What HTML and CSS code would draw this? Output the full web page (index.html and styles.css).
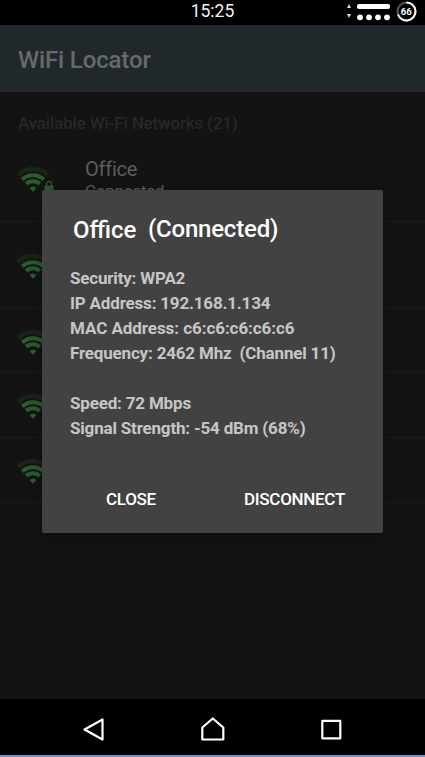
FILE: index.html
```
<!DOCTYPE html>
<html lang="en">
<head>
<meta charset="utf-8">
<title>WiFi Locator</title>
<link rel="stylesheet" href="styles.css">
</head>
<body>
<svg width="0" height="0" class="defs">
  <symbol id="wifi" viewBox="0 0 34 28">
    <path class="weak" d="M2 8.900A22 22 0 0 1 32 8.900"/>
    <path class="arc" d="M6.200 13.500A15.800 15.800 0 0 1 27.800 13.500"/>
    <path class="arc" d="M10.200 17.900A10 10 0 0 1 23.800 17.900"/>
    <path class="dot" d="M13.500 22Q17 19 20.500 22L17 26Z"/>
  </symbol>
</svg>
<div class="phone">
  <header class="status">
    <span class="clock">15:25</span>
    <svg class="signals" width="80" height="25" viewBox="345 0 80 25">
      <path fill="#ddd" d="M347 8l2-4 2 4zM347 14l2 4 2-4z"/>
      <rect x="357" y="4" width="33" height="5" rx="2" fill="#fff"/>
      <g fill="#fff"><circle cx="360" cy="17.300" r="2.900"/><circle cx="369" cy="17.300" r="2.900"/><circle cx="378" cy="17.300" r="2.900"/><circle cx="387" cy="17.300" r="2.900"/></g>
      <circle cx="406.500" cy="11.500" r="9" fill="none" stroke="#555" stroke-width="2"/>
      <path d="M406.500 2.500A9 9 0 1 1 398 14.500" fill="none" stroke="#fff" stroke-width="2"/>
      <text x="406.300" y="15" text-anchor="middle" class="battery">66</text>
    </svg>
  </header>
  <div class="appbar"><h1>WiFi Locator</h1></div>
  <main>
    <h2>Available Wi-Fi Networks (21)</h2>
    <div class="row first">
      <svg class="wifi"><use href="#wifi"/></svg>
      <svg class="lock" width="10" height="14" viewBox="0 0 10 14"><path d="M2.500 7V4a2.500 2.700 0 0 1 5 0V7" fill="none" stroke="#2b5c2d" stroke-width="1.300"/><rect x=".5" y="5.500" width="9" height="8" rx="1" fill="#2b5c2d"/></svg>
      <div class="network"><div class="name">Office</div><div class="state">Connected</div></div>
    </div>
    <div class="row second"><svg class="wifi"><use href="#wifi"/></svg></div>
    <div class="row"><svg class="wifi"><use href="#wifi"/></svg></div>
    <div class="row"><svg class="wifi"><use href="#wifi"/></svg></div>
    <div class="row"><svg class="wifi"><use href="#wifi"/></svg></div>
  </main>
  <nav>
    <svg width="425" height="56" viewBox="0 699 425 56" fill="none" stroke="#fff" stroke-width="2.200" stroke-linejoin="round">
      <path d="M84.500 729.500L102.500 719.500V739.500Z"/>
      <path d="M202.300 739.500V727.500L212.800 718.500L223.300 727.500V739.500Z"/>
      <rect x="322.300" y="720.800" width="18" height="17.500"/>
    </svg>
  </nav>
  <section class="dialog">
    <div class="title"><span class="ssid">Office</span><span class="conn">(Connected)</span></div>
    <div class="details">
      <p>Security: WPA2</p>
      <p>IP Address: 192.168.1.134</p>
      <p class="mac">MAC Address: c6:c6:c6:c6:c6</p>
      <p>Frequency: 2462 Mhz  (Channel 11)</p>
      <p></p>
      <p>Speed: 72 Mbps</p>
      <p>Signal Strength: -54 dBm (68%)</p>
    </div>
    <div class="actions"><button>CLOSE</button><button>DISCONNECT</button></div>
  </section>
</div>
</body>
</html>
```
FILE: styles.css
```
* { box-sizing: border-box; margin: 0; padding: 0; }
body { background: #131313; font-family: Roboto, sans-serif; }
.defs { position: absolute; }
.phone { position: relative; width: 425px; height: 757px; overflow: hidden; display: flex; flex-direction: column; background: #131313; border-bottom: 2px solid #6f8fd8; }
.status { position: relative; height: 25px; background: #000; text-align: center; flex: none; }
.clock { color: #f2f2f2; font-size: 17.500px; line-height: 23px; }
.signals { position: absolute; right: 0; top: 0; }
.battery { font: bold 9.500px Roboto, sans-serif; fill: #fff; }
.appbar { height: 67px; flex: none; background: #21282b; padding-left: 18px; }
h1 { font-size: 24px; font-weight: 500; line-height: 70px; letter-spacing: -.14px; color: #68696b; }
main { flex: 1; }
h2 { height: 55px; padding: 17px 0 0 18px; font-size: 17px; line-height: 28px; font-weight: 500; letter-spacing: -.17px; color: #23292c; }
.row { position: relative; height: 64.600px; padding: 4px 0 0 16px; border-bottom: 1px solid #1c1c1c; display: flex; align-items: center; }
.row.first { height: 74.600px; align-items: flex-start; padding-top: 18.500px; }
.row.second { height: 87.300px; }
.wifi { width: 34px; height: 28px; fill: none; flex: none; }
.weak { stroke: #192519; stroke-width: 4.600px; }
.arc { stroke: #2b5c2d; stroke-width: 4.200px; }
.dot { fill: #2b5c2d; }
.lock { position: absolute; left: 44px; top: 32.500px; }
.network { margin: -9px 0 0 35px; color: #5d5d5d; letter-spacing: -.25px; }
.name { font-size: 20px; line-height: 25px; }
.state { font-size: 17px; line-height: 19px; }
nav { height: 56px; background: #000; flex: none; }
nav svg { display: block; }
.dialog { position: absolute; left: 42px; top: 190px; width: 341px; height: 343px; border-radius: 2px; background: #424242; box-shadow: 0 4px 16px rgba(0,0,0,.3); display: flex; flex-direction: column; }
.title { display: flex; height: 76px; padding: 25px 0 0 31px; font-size: 24px; line-height: 31px; font-weight: 500; color: #fff; }
.conn { margin: -1px 0 0 11.500px; letter-spacing: -.2px; }
.details { padding-left: 28px; font-size: 17px; font-weight: 700; letter-spacing: -.18px; color: #c6c6c6; }
.details p { height: 25px; line-height: 25px; white-space: pre; }
.details .mac { letter-spacing: -.06px; }
.actions { display: flex; justify-content: space-between; margin-top: 46px; padding: 0 38px 0 64px; }
button { border: 0; background: none; color: #fff; font: 500 17px/24px Roboto, sans-serif; letter-spacing: -.3px; }
```
